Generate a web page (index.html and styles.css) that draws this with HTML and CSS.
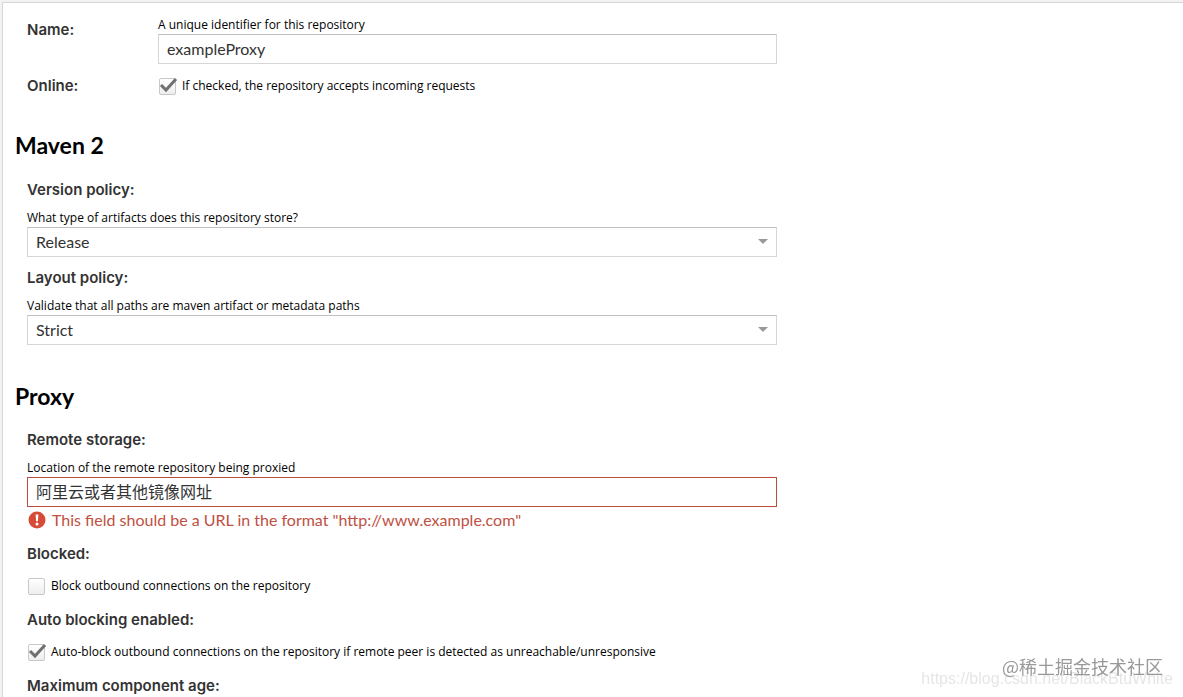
FILE: index.html
```html
<!DOCTYPE html>
<html lang="en">

<head>
    <meta charset="UTF-8">
    <meta name="viewport" content="width=device-width, initial-scale=1.0">
    <title>Repository</title>
    <link rel="stylesheet" href="styles.css">
</head>

<body>
    <main class="panel">
        <form class="form">
            <div class="row">
                <label class="label" for="name">Name:</label>
                <div class="row-body">
                    <p class="hint">A unique identifier for this repository</p>
                    <input class="control" type="text" id="name" value="exampleProxy">
                </div>
            </div>
            <div class="row row-online">
                <span class="label">Online:</span>
                <label class="check-row">
                    <input class="check" type="checkbox" checked>
                    <span class="check-icon"><svg viewBox="0 0 20 20"><path d="M3 9l5 5L18 3"/></svg></span>
                    If checked, the repository accepts incoming requests
                </label>
            </div>

            <h2 class="section-title">Maven 2</h2>
            <div class="field">
                <label class="label" for="version">Version policy:</label>
                <p class="hint">What type of artifacts does this repository store?</p>
                <div class="select-wrap">
                    <select class="control" id="version">
                        <option>Release</option>
                        <option>Snapshot</option>
                        <option>Mixed</option>
                    </select>
                </div>
            </div>
            <div class="field">
                <label class="label" for="layout">Layout policy:</label>
                <p class="hint">Validate that all paths are maven artifact or metadata paths</p>
                <div class="select-wrap">
                    <select class="control" id="layout">
                        <option>Strict</option>
                        <option>Permissive</option>
                    </select>
                </div>
            </div>

            <h2 class="section-title">Proxy</h2>
            <div class="field">
                <label class="label" for="remote">Remote storage:</label>
                <p class="hint">Location of the remote repository being proxied</p>
                <input class="control invalid" type="text" id="remote" value="阿里云或者其他镜像网址">
                <p class="error">
                    <svg class="error-icon" viewBox="0 0 18 18">
                        <circle cx="9" cy="9" r="8.5" fill="#d64a38"/>
                        <path d="M7.6 3.5h2.8l-.5 6.8H8.100z" fill="#fff"/>
                        <circle cx="9" cy="13" r="1.500" fill="#fff"/>
                    </svg>
                    This field should be a URL in the format "http://www.example.com"
                </p>
            </div>
            <div class="field field-check">
                <span class="label">Blocked:</span>
                <label class="check-row">
                    <input class="check" type="checkbox">
                    <span class="check-icon"><svg viewBox="0 0 20 20"><path d="M3 9l5 5L18 3"/></svg></span>
                    Block outbound connections on the repository
                </label>
            </div>
            <div class="field field-check">
                <span class="label">Auto blocking enabled:</span>
                <label class="check-row">
                    <input class="check" type="checkbox" checked>
                    <span class="check-icon"><svg viewBox="0 0 20 20"><path d="M3 9l5 5L18 3"/></svg></span>
                    Auto-block outbound connections on the repository if remote peer is detected as unreachable/unresponsive
                </label>
            </div>
            <div class="field field-check">
                <span class="label">Maximum component age:</span>
            </div>
        </form>
    </main>

    <div class="mark mark-url">https://blog.csdn.net/BlackBtuWhite</div>
    <div class="mark mark-site">@稀土掘金技术社区</div>
</body>

</html>
```

FILE: styles.css
```css
* {
    margin: 0;
    padding: 0;
    box-sizing: border-box;
}

body {
    font-family: "Lato", "Noto Sans CJK SC", sans-serif;
    font-size: 16px;
    background-color: #f2f2f2;
    color: #000;
    height: 100vh;
    padding: 2px 0 0 2px;
    overflow: hidden;
}

.panel {
    min-height: 100%;
    background-color: #fff;
    border-top: 1px solid #d6d6d6;
    border-left: 1px solid #d6d6d6;
    padding: 13px 12px 0;
}

.form {
    max-width: 762px;
}

.row {
    display: flex;
    padding-left: 12px;
}

.row .label {
    width: 131px;
    flex-shrink: 0;
    margin-top: 4px;
}

.row-online {
    margin-top: 12px;
}

.row-online .label {
    margin-top: 0;
}

.row-body {
    flex: 1;
}

.label {
    display: block;
    font-family: "Inter", sans-serif;
    font-size: 15px;
    font-weight: 600;
    line-height: 20px;
    color: #333;
}

.hint,
.check-row {
    font-family: "Open Sans", sans-serif;
    font-size: 12px;
    line-height: 18px;
}

.section-title {
    font-size: 23px;
    font-weight: bold;
    line-height: 26px;
    margin: 36px 0 22px;
}

.field + .section-title {
    margin: 38px 0 21px;
}

.field {
    padding-left: 12px;
}

.field + .field {
    margin-top: 11px;
}

.field .hint {
    margin-top: 9px;
}

.control {
    display: block;
    width: 100%;
    height: 30px;
    padding: 0 8px 2px;
    border: 1px solid #d6d6d6;
    border-top-color: #c0c0c0;
    border-radius: 0;
    background-color: #fff;
    color: #333;
    font-family: inherit;
    font-size: 16px;
    appearance: none;
    outline: none;
}

.control.invalid {
    border-color: #b84c3e;
}

.select-wrap {
    position: relative;
}

/* drop-down arrow */
.select-wrap::after {
    content: "";
    position: absolute;
    right: 9px;
    top: 12px;
    border: 5px solid transparent;
    border-top-color: #999;
    border-bottom: 0;
    pointer-events: none;
}

.error {
    display: flex;
    align-items: center;
    gap: 6px;
    margin-top: 3px;
    font-size: 16px;
    line-height: 20px;
    color: #c0503f;
}

.error-icon {
    width: 18px;
    height: 18px;
    margin-left: 1px;
}

.field + .field-check {
    margin-top: 14px;
}

.check-row {
    display: flex;
    align-items: center;
    line-height: 20px;
}

.field .check-row {
    margin-top: 12px;
}

.check {
    position: absolute;
    opacity: 0;
}

.check-icon {
    width: 17px;
    height: 17px;
    margin: 0 6px 0 1px;
    border: 1px solid #c8c8c8;
    border-radius: 2px;
    background: linear-gradient(#fff, #eee);
}

.check-icon svg {
    display: none;
    width: 20px;
    height: 20px;
    margin: -3px 0 0 -2px;
    fill: none;
    stroke: #707070;
    stroke-width: 3;
}

.check:checked + .check-icon svg {
    display: block;
}

.mark {
    position: fixed;
    white-space: nowrap;
}

.mark-url {
    right: 10px;
    bottom: 8px;
    font-family: "Liberation Sans", sans-serif;
    font-size: 16px;
    line-height: 20px;
    color: #e6e6e6;
}

.mark-site {
    right: 20px;
    bottom: 18px;
    font-family: "Noto Sans CJK SC", sans-serif;
    font-size: 18px;
    line-height: 26px;
    color: #999;
}
```
